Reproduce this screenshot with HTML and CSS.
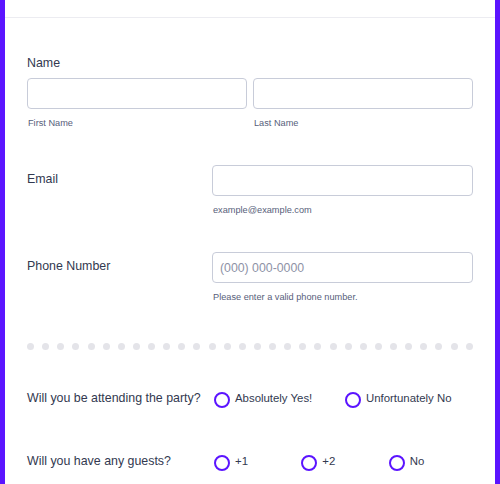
FILE: index.html
```html
<!DOCTYPE html>
<html>
<head>
<meta charset="utf-8">
<link rel="stylesheet" href="styles.css">
</head>
<body>
<div class="frame">
  <div class="header"></div>
  <div class="form">
    <div class="field name-field">
      <div class="label">Name</div>
      <div class="name-inputs">
        <div class="sub-col">
          <div class="input"></div>
          <div class="sublabel">First Name</div>
        </div>
        <div class="sub-col">
          <div class="input"></div>
          <div class="sublabel">Last Name</div>
        </div>
      </div>
    </div>

    <div class="field side-field email-field">
      <div class="label side-label">Email</div>
      <div class="sub-col">
        <div class="input"></div>
        <div class="sublabel">example@example.com</div>
      </div>
    </div>

    <div class="field side-field phone-field">
      <div class="label side-label">Phone Number</div>
      <div class="sub-col">
        <div class="input"><span class="placeholder">(000) 000-0000</span></div>
        <div class="sublabel">Please enter a valid phone number.</div>
      </div>
    </div>

    <div class="dots">
      <span></span><span></span><span></span><span></span><span></span><span></span><span></span><span></span><span></span><span></span>
      <span></span><span></span><span></span><span></span><span></span><span></span><span></span><span></span><span></span><span></span>
      <span></span><span></span><span></span><span></span><span></span><span></span><span></span><span></span><span></span><span></span>
    </div>

    <div class="question q-attend">
      <div class="label">Will you be attending the party?</div>
      <div class="options options-2">
        <div class="option"><span class="radio"></span><span class="opt-text">Absolutely Yes!</span></div>
        <div class="option"><span class="radio"></span><span class="opt-text">Unfortunately No</span></div>
      </div>
    </div>

    <div class="question q-guests">
      <div class="label">Will you have any guests?</div>
      <div class="options options-3">
        <div class="option"><span class="radio"></span><span class="opt-text">+1</span></div>
        <div class="option"><span class="radio"></span><span class="opt-text">+2</span></div>
        <div class="option"><span class="radio"></span><span class="opt-text">No</span></div>
      </div>
    </div>
  </div>
</div>
</body>
</html>
```

FILE: styles.css
```css
* { box-sizing: border-box; }

html, body {
  margin: 0;
  padding: 0;
  background: #ffffff;
}

body {
  font-family: "Liberation Sans", Arial, sans-serif;
  color: #2c3345;
}

.frame {
  width: 500px;
  height: 484px;
  overflow: hidden;
  border-left: 5px solid #5b14ff;
  border-right: 5px solid #5b14ff;
  background: #ffffff;
}

.header {
  height: 18px;
  border-bottom: 1px solid #ececf1;
}

.form {
  padding: 0 22px;
}

.label {
  font-size: 12.4px;
  line-height: 16px;
  color: #323950;
}

.name-field {
  padding-top: 37px;
}

.name-inputs {
  display: grid;
  grid-template-columns: 1fr 1fr;
  column-gap: 6px;
  margin-top: 7px;
}

.sub-col {
  display: flex;
  flex-direction: column;
}

.input {
  height: 31px;
  border: 1px solid #c8ccd9;
  border-radius: 4px;
  background: #ffffff;
  display: flex;
  align-items: center;
  padding-left: 7px;
}

.placeholder {
  font-size: 12.3px;
  color: #8e92a6;
}

.sublabel {
  margin-top: 8px;
  font-size: 9.2px;
  line-height: 12px;
  color: #57607a;
  padding-left: 1px;
}

.side-field {
  display: grid;
  grid-template-columns: 185px 1fr;
  margin-top: 36px;
}

.side-label {
  padding-top: 6px;
}

.dots {
  display: flex;
  justify-content: space-between;
  margin-top: 40px;
}

.dots span {
  width: 7px;
  height: 7px;
  border-radius: 50%;
  background: #e4e4e9;
}

.question {
  display: grid;
  grid-template-columns: 187px 1fr;
  align-items: start;
}

.q-attend {
  margin-top: 40px;
}

.q-guests {
  margin-top: 45px;
}

.options {
  display: grid;
  width: 262px;
}

.options-2 { grid-template-columns: repeat(2, 1fr); }
.options-3 { grid-template-columns: repeat(3, 1fr); }

.option {
  display: flex;
  align-items: flex-start;
  gap: 5px;
}

.radio {
  width: 16px;
  height: 16px;
  margin-top: 2px;
  border: 2px solid #5b14ff;
  border-radius: 50%;
  flex: none;
}

.opt-text {
  font-size: 11.4px;
  line-height: 16px;
  color: #323950;
}
```
